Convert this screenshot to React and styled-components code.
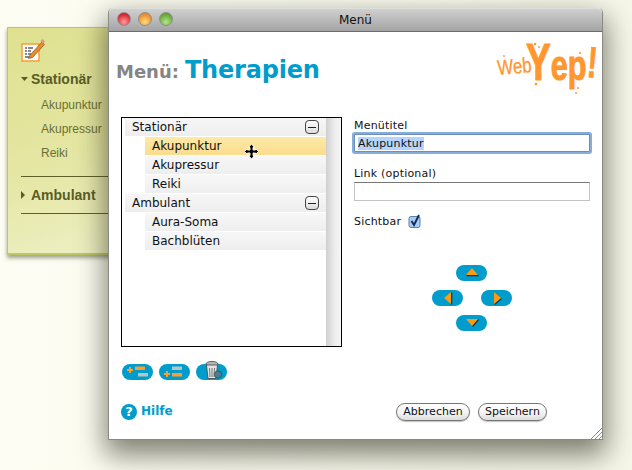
import React from "react";
import styled, { createGlobalStyle } from "styled-components";

const GlobalStyle = createGlobalStyle`
  html, body {
    margin: 0;
    padding: 0;
    background: #fbfcf0;
  }
`;

const Desktop = styled.div`
  position: relative;
  width: 632px;
  height: 470px;
  overflow: hidden;
  background: linear-gradient(90deg, #fdfdf3 0%, #f6f7e8 100%);
`;

/* page behind the dialog */
const BackPanel = styled.div`
  position: absolute;
  left: 7px;
  top: 27px;
  width: 220px;
  height: 228px;
  box-sizing: border-box;
  padding: 9px 0 0 13px;
  background: linear-gradient(165deg, #dfe190 0%, #e4e6a2 50%, #f0f2cc 100%);
  border: 1px solid #bcc765;
  border-bottom-width: 2px;
  box-shadow: 0 3px 4px rgba(70, 70, 40, 0.5);
  font-family: "Liberation Sans", Arial, sans-serif;
  color: #6a7033;
`;

const PanelIcon = styled.svg`
  display: block;
`;

const PanelHead = styled.div`
  display: flex;
  align-items: center;
  gap: 3px;
  height: 18px;
  font-size: 14px;
  font-weight: bold;
  color: #585d27;
  margin-top: ${(p) => p.$top}px;
`;

const PanelItem = styled.div`
  font-size: 12px;
  height: 24px;
  line-height: 24px;
  padding-left: 20px;
`;

const PanelItems = styled.div`
  margin-top: 5px;
  margin-bottom: 11px;
`;

const PanelRule = styled.div`
  height: 1px;
  background: #5b6026;
  margin-top: ${(p) => p.$top || 0}px;
`;

const Window = styled.div`
  position: absolute;
  left: 108px;
  top: 8px;
  width: 495px;
  height: 432px;
  box-sizing: border-box;
  display: flex;
  flex-direction: column;
  background: #fff;
  border: 1px solid #8a8a84;
  border-top: 0;
  border-radius: 5px 5px 0 0;
  box-shadow: 0 12px 28px 3px rgba(45, 45, 30, 0.6);
  font-family: "DejaVu Sans", Verdana, sans-serif;
  color: #111;
`;

const TitleBar = styled.div`
  position: relative;
  flex: none;
  height: 24px;
  box-sizing: border-box;
  display: flex;
  align-items: center;
  justify-content: center;
  border-radius: 5px 5px 0 0;
  border-top: 1px solid #dededa;
  border-bottom: 1px solid #6c6c6c;
  background: linear-gradient(180deg, #d0d0d0 0%, #a4a4a4 100%);
  font-size: 12px;
`;

const Lights = styled.div`
  position: absolute;
  left: 8px;
  top: 3px;
  display: flex;
  gap: 7px;
`;

const Light = styled.span`
  width: 14px;
  height: 14px;
  border-radius: 50%;
  border: 1px solid #8e8e8e;
  box-sizing: border-box;
  background: radial-gradient(
    circle at 50% 75%,
    ${(p) => p.$light} 0%,
    ${(p) => p.$dark} 75%
  );
`;

const Content = styled.div`
  position: relative;
  flex: 1;
  display: flex;
  flex-direction: column;
  padding: 0 12px 18px 12px;
`;

const Header = styled.div`
  height: 85px;
  display: flex;
  justify-content: space-between;
  align-items: flex-start;
  margin-left: -5px;
`;

const Heading = styled.div`
  display: flex;
  align-items: baseline;
  gap: 6px;
  margin-top: 24px;
  font-weight: bold;
`;

const HeadLabel = styled.span`
  font-size: 18px;
  color: #858585;
`;

const HeadName = styled.span`
  font-size: 24px;
  letter-spacing: -0.2px;
  color: #009ccc;
`;

const Logo = styled.svg`
  flex: none;
  margin: 7px -8px 0 0;
  overflow: visible;
`;

const Main = styled.div`
  flex: 1;
  display: grid;
  grid-template-columns: 221px 236px;
  column-gap: 12px;
`;

const LeftCol = styled.div`
  display: flex;
  flex-direction: column;
`;

const RightCol = styled.div`
  display: flex;
  flex-direction: column;
`;

const TreeBox = styled.div`
  position: relative;
  height: 230px;
  box-sizing: border-box;
  border: 1px solid #000;
  padding-left: 3px;
  display: grid;
  grid-template-columns: 1fr 15px;
`;

const Rows = styled.div`
  display: flex;
  flex-direction: column;
  gap: 1px;
`;

const Scroller = styled.div`
  background: linear-gradient(90deg, #cfcfcf 0%, #ececec 55%, #f6f6f6 100%);
`;

const Row = styled.div`
  position: relative;
  height: 18px;
  display: flex;
  align-items: center;
  justify-content: space-between;
  box-sizing: border-box;
  margin-left: ${(p) => (p.$child ? 20 : 0)}px;
  padding: 0 7px;
  font-size: 12px;
  background: ${(p) =>
    p.$active
      ? "linear-gradient(180deg, #fde9a6 0%, #fcdc8e 100%)"
      : "linear-gradient(180deg, #f7f7f7 0%, #eeeeee 100%)"};
`;

const Collapse = styled.span`
  width: 14px;
  height: 14px;
  box-sizing: border-box;
  border: 1px solid #444;
  border-radius: 4px;
  background: linear-gradient(180deg, #fff 0%, #ddd 100%);
  display: flex;
  align-items: center;
  justify-content: center;
  &::after {
    content: "";
    width: 8px;
    height: 1px;
    background: #222;
  }
`;

const MoveCursor = styled.svg`
  position: absolute;
  left: 99px;
  top: 6px;
  z-index: 1;
`;

const Tools = styled.div`
  display: flex;
  gap: 6px;
  margin: 17px 0 0 1px;
`;

const Pill = styled.button`
  position: relative;
  flex: none;
  width: 31px;
  height: 16px;
  padding: 0;
  border: 0;
  border-radius: 8px;
  background: #009ccc;
  display: flex;
  align-items: center;
  justify-content: center;
`;

const PadPill = styled(Pill)`
  margin-left: 24px;
`;

const TrashGlyph = styled.svg`
  position: absolute;
  left: 9px;
  top: -4px;
`;

const Help = styled.a`
  display: flex;
  align-items: flex-start;
  gap: 4px;
  margin-top: auto;
  margin-bottom: 1px;
  font-size: 12px;
  line-height: 14px;
  font-weight: bold;
  color: #009ccc;
`;

const HelpIcon = styled.span`
  width: 16px;
  height: 16px;
  border-radius: 50%;
  background: #009ccc;
  color: #fff;
  font-size: 13px;
  line-height: 16px;
  text-align: center;
`;

const Field = styled.label`
  display: flex;
  flex-direction: column;
  font-size: 11px;
  letter-spacing: 0.2px;
  margin-bottom: ${(p) => p.$bottom}px;
`;

const FieldLabel = styled.span`
  height: 13px;
  line-height: 13px;
  margin-top: 2px;
  margin-bottom: 2px;
`;

const TextBox = styled.input`
  box-sizing: border-box;
  width: 236px;
  height: 19px;
  padding: 0 3px;
  margin: 0;
  border: 1px solid #c4c4c4;
  border-top-color: #777;
  outline: none;
  font-family: "DejaVu Sans", Verdana, sans-serif;
  font-size: 11px;
  color: #111;
  background: #fff;
`;

const Selected = styled.span`
  background: #b5d5ff;
`;

const FocusBox = styled.div`
  box-sizing: border-box;
  width: 236px;
  height: 18px;
  padding: 0 3px;
  display: flex;
  align-items: center;
  border: 1px solid #6c8fb5;
  box-shadow: 0 0 0 2px #86aedd;
  border-radius: 1px;
  font-size: 11px;
  letter-spacing: 0.2px;
  background: #fff;
`;

const CheckRow = styled.div`
  display: flex;
  align-items: center;
  gap: 7px;
  font-size: 11px;
  letter-spacing: 0.2px;
  height: 16px;
  margin-top: 1px;
`;

const Pad = styled.div`
  display: flex;
  flex-direction: column;
  align-items: flex-start;
  gap: 9px;
  width: 80px;
  margin: 36px 0 0 78px;
`;

const PadRow = styled.div`
  display: flex;
  gap: 18px;
`;

const Actions = styled.div`
  display: flex;
  gap: 8px;
  margin-top: auto;
  padding-left: 42px;
`;

const PushButton = styled.button`
  height: 18px;
  width: ${(p) => p.$width}px;
  padding: 0;
  box-sizing: border-box;
  border: 1px solid #777;
  border-radius: 9px;
  background: linear-gradient(180deg, #fff 0%, #f4f4f4 55%, #dcdcdc 100%);
  box-shadow: 0 1px 1px rgba(0, 0, 0, 0.25);
  font-family: "DejaVu Sans", Verdana, sans-serif;
  font-size: 11px;
  line-height: 16px;
  color: #111;
`;

const Grip = styled.svg`
  position: absolute;
  right: 0;
  bottom: 0;
`;

const Triangle = ({ dir }) => {
  const shapes = {
    up: "2,10 14,10 8,3",
    down: "2,4 14,4 8,11",
    left: "11,2 11,14 4,8",
    right: "5,2 5,14 12,8",
  };
  const shade = {
    up: "2,10 14,10",
    down: "14,4 8,11",
    left: "11,2 11,14",
    right: "5,14 12,8",
  };
  return (
    <svg width="16" height="16" viewBox="0 0 16 16">
      <polyline points={shade[dir]} fill="none" stroke="#0b3f55" strokeWidth="1.6" transform="translate(0.5 0.5)" />
      <polygon points={shapes[dir]} fill="#ff9a0c" />
    </svg>
  );
};

const PlusBars = ({ lower }) => (
  <svg width="25" height="14" viewBox="0 0 25 14">
    <path
      d={lower ? "M2 9h6M5 6v6" : "M2 5h6M5 2v6"}
      stroke="#ff9d2e"
      strokeWidth="2"
      fill="none"
    />
    <rect x="10" y="1.5" width="10" height="3.5" fill={lower ? "#b2c6c4" : "#ff9d2e"} />
    <rect x={lower ? 10 : 13} y="8" width="10" height="3.5" fill={lower ? "#ff9d2e" : "#b2c6c4"} />
  </svg>
);

const NotePencil = () => (
  <PanelIcon width="24" height="26" viewBox="0 0 24 26">
    <rect x="1" y="7" width="17" height="17" fill="#fff" stroke="#ff9a33" strokeWidth="1.5" />
    <path d="M4 11h2M7 11h5M4 14h2M7 14h3M4 17h2M7 17h3M4 20h7" stroke="#111" strokeWidth="1" />
    <path d="M9 18l12-13 2.5 2.5-12 13-4 1z" fill="#f08a1e" stroke="#6b5b45" strokeWidth="0.7" />
    <path d="M19.5 4l2-2 2.5 2.5-2 2z" fill="#e88f86" />
  </PanelIcon>
);

const App = () => {
  return (
    <>
      <GlobalStyle />
      <Desktop>
        <BackPanel>
          <NotePencil />
          <PanelHead $top={7}>
            <svg width="7" height="6" viewBox="0 0 7 6">
              <polygon points="0,1 7,1 3.5,5" fill="#585d27" />
            </svg>
            <span>Stationär</span>
          </PanelHead>
          <PanelItems>
            <PanelItem>Akupunktur</PanelItem>
            <PanelItem>Akupressur</PanelItem>
            <PanelItem>Reiki</PanelItem>
          </PanelItems>
          <PanelRule />
          <PanelHead $top={9}>
            <svg width="7" height="9" viewBox="0 0 7 9">
              <polygon points="0,0 4,4 0,8" fill="#585d27" />
            </svg>
            <span>Ambulant</span>
          </PanelHead>
          <PanelRule $top={9} />
        </BackPanel>

        <Window>
          <TitleBar>
            <Lights>
              <Light $light="#ff9c9c" $dark="#d3202b" />
              <Light $light="#ffdc7a" $dark="#e8872a" />
              <Light $light="#b5e58a" $dark="#5da42f" />
            </Lights>
            Menü
          </TitleBar>
          <Content>
            <Header>
              <Heading>
                <HeadLabel>Menü:</HeadLabel>
                <HeadName>Therapien</HeadName>
              </Heading>
              <Logo width="106" height="56" viewBox="0 0 106 56">
                <g fill="#ff962e" stroke="#ff962e" fontFamily="Liberation Sans, sans-serif">
                  <text transform="translate(6 36) rotate(-5) scale(0.8 1)" fontSize="21" strokeWidth="0.3">Web</text>
                  <text transform="translate(34 41) scale(0.73 1)" fontSize="51" fontWeight="bold" strokeWidth="1">
                    Y<tspan fontSize="42">ep</tspan>
                  </text>
                  <text transform="translate(94 38) rotate(5) scale(0.7 1)" fontSize="44" fontWeight="bold" strokeWidth="0.6">!</text>
                  <g stroke="none">
                    <circle cx="43" cy="5" r="1.2" />
                    <circle cx="47" cy="8" r="1" />
                    <circle cx="44" cy="45" r="1.3" />
                    <circle cx="84" cy="54" r="1" />
                    <circle cx="86" cy="49" r="1" />
                    <circle cx="12" cy="17" r="0.9" />
                    <circle cx="88" cy="14" r="1.1" />
                  </g>
                </g>
              </Logo>
            </Header>
            <Main>
              <LeftCol>
                <TreeBox>
                  <Rows>
                    <Row>
                      Stationär
                      <Collapse />
                    </Row>
                    <Row $child $active>
                      Akupunktur
                      <MoveCursor width="15" height="17" viewBox="0 0 15 17">
                        <path
                          d="M7.5 1l3 3.5H9v2.5h2.5V5.5l3 3-3 3V10H9v2.5h1.5l-3 3.5-3-3.5H6V10H3.5v1.5l-3-3 3-3V7H6V4.5H4.5z"
                          fill="#000"
                          stroke="#fff"
                          strokeWidth="0.9"
                        />
                      </MoveCursor>
                    </Row>
                    <Row $child>Akupressur</Row>
                    <Row $child>Reiki</Row>
                    <Row>
                      Ambulant
                      <Collapse />
                    </Row>
                    <Row $child>Aura-Soma</Row>
                    <Row $child>Bachblüten</Row>
                  </Rows>
                  <Scroller />
                </TreeBox>
                <Tools>
                  <Pill type="button">
                    <PlusBars />
                  </Pill>
                  <Pill type="button">
                    <PlusBars lower />
                  </Pill>
                  <Pill type="button">
                    <TrashGlyph width="18" height="20" viewBox="0 0 18 20">
                      <ellipse cx="7" cy="4" rx="6" ry="2.6" fill="#b4b4b4" stroke="#444" strokeWidth="0.8" />
                      <path d="M1.5 5l1.5 13.5h8l1.5-13.5z" fill="#e2e2e2" stroke="#444" strokeWidth="0.8" />
                      <path d="M4.5 8l.5 9M7 8v9M9.5 8l-.5 9" stroke="#777" strokeWidth="1" />
                      <circle cx="13" cy="14.5" r="3.6" fill="#4b7f90" stroke="#24505f" strokeWidth="0.8" />
                    </TrashGlyph>
                  </Pill>
                </Tools>
                <Help>
                  <HelpIcon>?</HelpIcon>
                  Hilfe
                </Help>
              </LeftCol>
              <RightCol>
                <Field as="div" $bottom={13}>
                  <FieldLabel>Menütitel</FieldLabel>
                  <FocusBox>
                    <Selected>Akupunktur</Selected>
                  </FocusBox>
                </Field>
                <Field $bottom={11}>
                  <FieldLabel>Link (optional)</FieldLabel>
                  <TextBox readOnly value="" />
                </Field>
                <CheckRow>
                  Sichtbar
                  <svg width="14" height="16" viewBox="0 0 14 16">
                    <rect x="1" y="3.5" width="11" height="11" rx="2" fill="#a9cdf2" stroke="#5f7f9f" />
                    <path d="M3.5 8l2.5 4L11 2" fill="none" stroke="#14305a" strokeWidth="2" />
                  </svg>
                </CheckRow>
                <Pad>
                  <PadPill type="button">
                    <Triangle dir="up" />
                  </PadPill>
                  <PadRow>
                    <Pill type="button">
                      <Triangle dir="left" />
                    </Pill>
                    <Pill type="button">
                      <Triangle dir="right" />
                    </Pill>
                  </PadRow>
                  <PadPill type="button">
                    <Triangle dir="down" />
                  </PadPill>
                </Pad>
                <Actions>
                  <PushButton type="button" $width={74}>Abbrechen</PushButton>
                  <PushButton type="button" $width={69}>Speichern</PushButton>
                </Actions>
              </RightCol>
            </Main>
            <Grip width="12" height="12" viewBox="0 0 12 12">
              <path d="M1 12L12 1M5 12l7-7M9 12l3-3" stroke="#8a8a8a" strokeWidth="1" />
            </Grip>
          </Content>
        </Window>
      </Desktop>
    </>
  );
};

export default App;
